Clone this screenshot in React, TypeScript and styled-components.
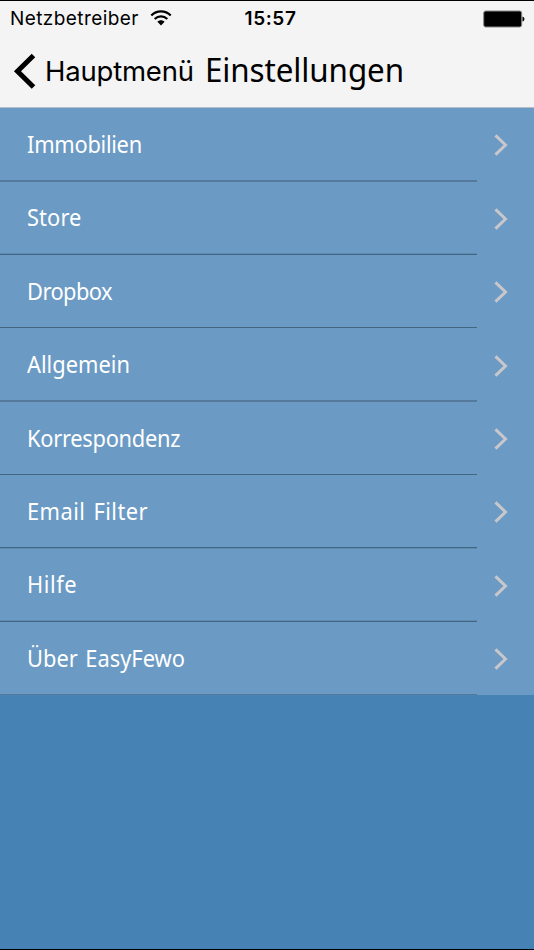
import React from "react";
import styled, { createGlobalStyle } from "styled-components";

const GlobalStyle = createGlobalStyle`
  * { box-sizing: border-box; }
  html, body { margin: 0; padding: 0; background: #4682b4; }
`;

const Screen = styled.div`
  display: flex;
  flex-direction: column;
  width: 534px;
  height: 950px;
  overflow: hidden;
  background: #4682b4;
  border-top: 1px solid #000;
  border-bottom: 1px solid #000;
`;

const Header = styled.header`
  flex: none;
  height: 107px;
  background: #f4f4f4;
  border-bottom: 1px solid #b4c0c9;
  color: #000;
`;

const StatusBar = styled.div`
  display: grid;
  grid-template-columns: 1fr auto 1fr;
  align-items: center;
  height: 34px;
  padding: 0 9px 0 10px;
  font-family: Inter, "Liberation Sans", sans-serif;
  font-size: 19px;
  line-height: 34px;
`;

const Carrier = styled.div`
  display: flex;
  align-items: center;
  gap: 10px;
`;

const CarrierName = styled.span`
  width: 130px;
  padding-top: 1px;
  letter-spacing: 0.42px;
  white-space: nowrap;
`;

const Clock = styled.time`
  font-weight: 600;
  letter-spacing: 0.6px;
  margin-left: 6px;
  padding-top: 1px;
`;

const Battery = styled.svg`
  justify-self: end;
`;

const NavBar = styled.nav`
  display: flex;
  height: 72px;
  padding-left: 13px;
`;

const BackButton = styled.button`
  display: flex;
  align-items: flex-start;
  width: 192px;
  padding: 0;
  border: 0;
  background: none;
  color: #000;
  font: 27.5px/36px Inter, "Liberation Sans", sans-serif;
  text-align: left;
`;

const BackArrow = styled.svg`
  flex: none;
  width: 24px;
  height: 36px;
  margin: 18px 8px 0 0;
`;

const BackLabel = styled.span`
  margin-top: 18px;
  letter-spacing: -0.2px;
  white-space: nowrap;
`;

const Title = styled.h1`
  margin: 15px 0 0;
  font: 400 33px/40px "Noto Sans", sans-serif;
  letter-spacing: -0.1px;
  white-space: nowrap;
  transform: scaleX(0.95);
  transform-origin: left;
`;

const Menu = styled.ul`
  flex: none;
  display: grid;
  grid-auto-rows: 73.4px;
  margin: 0;
  padding: 0;
  list-style: none;
  background: #6b9ac4;
`;

const MenuItem = styled.li`
  display: flex;
  align-items: center;
  justify-content: space-between;
  padding-right: 26.5px;
`;

const dark = "#426580";
const medium = "#54799a";
const light = "#608bb0";

const ItemLabel = styled.span<{ $line: string; $above: string; $below: string }>`
  width: 477px;
  height: 100%;
  padding: 19px 0 0 27px;
  border-bottom: 1px solid ${(p) => p.$line};
  box-shadow: inset 0 -1px ${(p) => p.$above}, 0 1px ${(p) => p.$below};
`;

const ItemText = styled.span<{ $spacing: number }>`
  display: inline-block;
  color: #fff;
  font: 23.5px/34px "Noto Sans", sans-serif;
  letter-spacing: ${(p) => p.$spacing}px;
  word-spacing: 2px;
  white-space: nowrap;
  transform: scaleX(0.93);
  transform-origin: left;
`;

const Chevron = styled.svg`
  width: 14px;
  height: 22px;
  margin-top: 1.6px;
`;

const none = "transparent";

const items = [
  { label: "Immobilien", spacing: -0.3, line: medium, above: none, below: medium },
  { label: "Store", spacing: 0.1, line: dark, above: light, below: none },
  { label: "Dropbox", spacing: -0.6, line: dark, above: none, below: none },
  { label: "Allgemein", spacing: 0, line: medium, above: medium, below: none },
  { label: "Korrespondenz", spacing: -0.3, line: dark, above: none, below: none },
  { label: "Email Filter", spacing: 0.5, line: dark, above: none, below: light },
  { label: "Hilfe", spacing: 0.6, line: dark, above: light, below: none },
  { label: "Über EasyFewo", spacing: 0, line: medium, above: none, below: none },
];

function WifiIcon() {
  return (
    <svg width="22" height="17" viewBox="0 0 22 17" fill="none" stroke="#000" strokeWidth="2.3">
      <path d="M1.3 5.5C6.8 .1 15.2 .1 20.7 5.5" />
      <path d="M4.7 9C8.3 5.5 13.7 5.5 17.3 9" />
      <path d="M11 15.5L7.4 11.8C9.4 9.8 12.6 9.8 14.6 11.8Z" fill="#000" stroke="none" />
    </svg>
  );
}

export default function App() {
  return (
    <Screen>
      <GlobalStyle />
      <Header>
        <StatusBar>
          <Carrier>
            <CarrierName>Netzbetreiber</CarrierName>
            <WifiIcon />
          </Carrier>
          <Clock>15:57</Clock>
          <Battery width="42" height="18" viewBox="0 0 42 18">
            <rect x=".7" y="1" width="38" height="16" rx="2" fill="#000" stroke="#888" />
            <path d="M39.5 6.5Q41.5 7 41.5 9T39.5 11.5Z" />
          </Battery>
        </StatusBar>
        <NavBar>
          <BackButton>
            <BackArrow viewBox="0 0 24 36" fill="none" stroke="#000" strokeWidth="5">
              <path d="M20.5 2.5L4.5 18.2L20.5 34" />
            </BackArrow>
            <BackLabel>Hauptmenü</BackLabel>
          </BackButton>
          <Title>Einstellungen</Title>
        </NavBar>
      </Header>
      <Menu>
        {items.map(({ label, spacing, line, above, below }) => (
          <MenuItem key={label}>
            <ItemLabel $line={line} $above={above} $below={below}>
              <ItemText $spacing={spacing}>{label}</ItemText>
            </ItemLabel>
            <Chevron viewBox="0 0 14 22" fill="none" stroke="#c7c7cc" strokeWidth="3">
              <path d="M1.5 1.3L11.5 11L1.5 20.7" />
            </Chevron>
          </MenuItem>
        ))}
      </Menu>
    </Screen>
  );
}
